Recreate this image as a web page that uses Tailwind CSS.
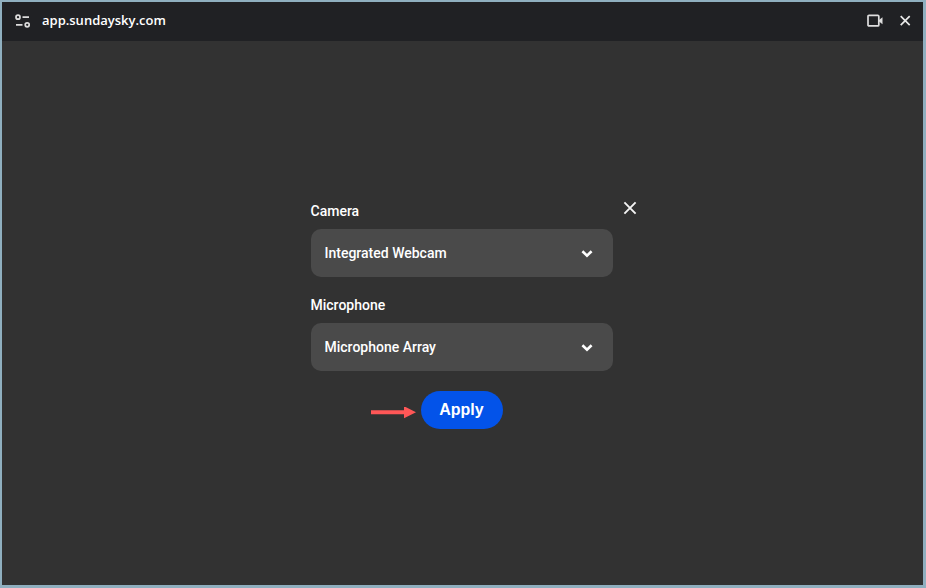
<!DOCTYPE html>
<html lang="en">
<head>
  <meta charset="UTF-8" />
  <meta name="viewport" content="width=device-width, initial-scale=1" />
  <title>app.sundaysky.com</title>
  <script src="https://cdn.jsdelivr.net/npm/@tailwindcss/browser@4"></script>
</head>
<body class="min-h-screen flex flex-col bg-[#323232] text-white font-['Roboto',sans-serif] border-t-2 border-l-2 border-r-3 border-b-3 border-[#8fafbf]">
  <!-- Title bar -->
  <header class="flex items-center h-[39px] px-3 pb-0.5 bg-[#202124]">
    <svg class="w-[18px] h-4 mr-2.5" viewBox="0 0 18 16" fill="none" stroke="#dcdcdc" stroke-width="1.7">
      <circle cx="4" cy="4.2" r="2" />
      <path d="M8.5 4.2H15M2 11.8h6.5" />
      <circle cx="13.2" cy="11.8" r="2" />
    </svg>
    <span class="text-[13px] font-semibold font-['Open_Sans',sans-serif]">app.sundaysky.com</span>

    <div class="ml-auto flex items-center gap-4">
      <button type="button" aria-label="Camera in use">
        <svg class="w-4 h-4" viewBox="0 0 16 16" fill="none">
          <rect x="1" y="2.3" width="10.8" height="10.6" rx="1" stroke="#dedede" stroke-width="1.7" />
          <path d="M12 7L15.5 4.2v7L12 8.4z" fill="#dedede" />
        </svg>
      </button>
      <button type="button" aria-label="Close window">
        <svg class="w-3 h-3" viewBox="0 0 12 12" fill="none" stroke="#e8e8e8" stroke-width="1.7">
          <path d="M1.7 1.2l9 9M10.7 1.2l-9 9" />
        </svg>
      </button>
    </div>
  </header>

  <!-- Device settings -->
  <main class="flex-1 flex items-center justify-center pt-1 pr-0.5">
    <form class="relative w-full max-w-[302px] flex flex-col">
      <button type="button" aria-label="Close settings" class="absolute top-0 -right-6">
        <svg class="w-3.5 h-3.5" viewBox="0 0 14 14" fill="none" stroke="#f5f5f5" stroke-width="1.9">
          <path d="M1.4 1.4l11.2 11.2M12.6 1.4L1.4 12.6" />
        </svg>
      </button>

      <label for="camera" class="text-sm font-medium mb-2">Camera</label>
      <div class="relative mb-[18px]">
        <select
          id="camera"
          class="appearance-none w-full h-12 pl-3.5 pr-10 rounded-[10px] bg-[#4a4a4a] text-sm font-medium"
        >
          <option>Integrated Webcam</option>
        </select>
        <svg class="absolute right-5 top-[18px] w-3 h-3 pointer-events-none" viewBox="0 0 12 12" fill="none" stroke="#fff" stroke-width="2.6">
          <path d="M1.4 4.2L6 8.6l4.6-4.4" />
        </svg>
      </div>

      <label for="microphone" class="text-sm font-medium mb-2">Microphone</label>
      <div class="relative mb-5">
        <select
          id="microphone"
          class="appearance-none w-full h-12 pl-3.5 pr-10 rounded-[10px] bg-[#4a4a4a] text-sm font-medium"
        >
          <option>Microphone Array</option>
        </select>
        <svg class="absolute right-5 top-[18px] w-3 h-3 pointer-events-none" viewBox="0 0 12 12" fill="none" stroke="#fff" stroke-width="2.6">
          <path d="M1.4 4.2L6 8.6l4.6-4.4" />
        </svg>
      </div>

      <div class="relative self-center">
        <button type="submit" class="h-[38px] w-[82px] rounded-full bg-[#0353e9] text-base font-bold font-['Liberation_Sans',Arial,sans-serif]">Apply</button>
        <!-- Arrow pointing at the button -->
        <svg class="absolute right-full top-4 mr-1 w-[46px] h-3" viewBox="0 0 46 12" fill="#ff5757">
          <path d="M0 3.2h33V-.8l12 6-12 6v-4H0z" />
        </svg>
      </div>
    </form>
  </main>
</body>
</html>
